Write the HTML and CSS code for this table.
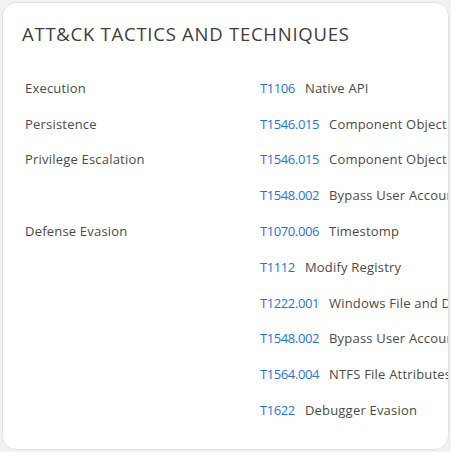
FILE: index.html
```html
<!DOCTYPE html>
<html>
<head>
<meta charset="utf-8">
<link rel="stylesheet" href="styles.css">
</head>
<body>
<div class="card">
  <h2 class="title">ATT&amp;CK TACTICS AND TECHNIQUES</h2>
  <div class="table">
    <div class="row"><div class="tactic">Execution</div><div class="tech"><a class="id">T1106</a><span class="name">Native API</span></div></div>
    <div class="row"><div class="tactic">Persistence</div><div class="tech"><a class="id">T1546.015</a><span class="name">Component Object Model Hijacking</span></div></div>
    <div class="row"><div class="tactic">Privilege Escalation</div><div class="tech"><a class="id">T1546.015</a><span class="name">Component Object Model Hijacking</span></div></div>
    <div class="row"><div class="tactic"></div><div class="tech"><a class="id">T1548.002</a><span class="name">Bypass User Account Control</span></div></div>
    <div class="row"><div class="tactic">Defense Evasion</div><div class="tech"><a class="id">T1070.006</a><span class="name">Timestomp</span></div></div>
    <div class="row"><div class="tactic"></div><div class="tech"><a class="id">T1112</a><span class="name">Modify Registry</span></div></div>
    <div class="row"><div class="tactic"></div><div class="tech"><a class="id">T1222.001</a><span class="name">Windows File and Directory Permissions Modification</span></div></div>
    <div class="row"><div class="tactic"></div><div class="tech"><a class="id">T1548.002</a><span class="name">Bypass User Account Control</span></div></div>
    <div class="row"><div class="tactic"></div><div class="tech"><a class="id">T1564.004</a><span class="name">NTFS File Attributes</span></div></div>
    <div class="row"><div class="tactic"></div><div class="tech"><a class="id">T1622</a><span class="name">Debugger Evasion</span></div></div>
  </div>
</div>
</body>
</html>
```
FILE: styles.css
```css
html, body {
  margin: 0;
  padding: 0;
  background: #f2f2f2;
}
body {
  padding: 2px;
  font-family: "Open Sans", "DejaVu Sans", sans-serif;
  color: #4a4a4a;
}
.card {
  width: 447px;
  height: 448px;
  box-sizing: border-box;
  background: #fff;
  border: 1px solid #e2e2e2;
  border-radius: 14px;
  overflow: hidden;
  padding: 19px 0 0 19px;
}
.title {
  margin: 0 0 24px 0;
  font-size: 18.5px;
  font-weight: 400;
  line-height: 24px;
  color: #3d3d3d;
  letter-spacing: 0.75px;
  white-space: nowrap;
}
.table {
  display: flex;
  flex-direction: column;
}
.row {
  display: flex;
  height: 35.8px;
  align-items: center;
  white-space: nowrap;
  font-size: 13px;
  letter-spacing: 0.2px;
}
.tactic {
  width: 235px;
  flex: none;
  padding-left: 3px;
}
.tech {
  display: flex;
  gap: 10px;
}
.id {
  color: #1f74e0;
  letter-spacing: -0.4px;
}
.name {
  color: #4a4a4a;
}
```
